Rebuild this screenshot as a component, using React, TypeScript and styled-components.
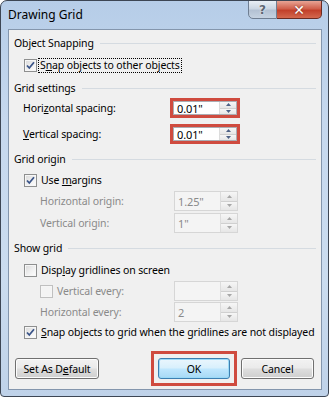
import { createGlobalStyle, styled } from 'styled-components'

const GlobalStyle = createGlobalStyle`
  html, body {
    margin: 0;
    padding: 0;
    background: #ffffff;
  }
  body {
    font-family: 'Noto Sans', 'DejaVu Sans', sans-serif;
    font-size: 10.5px;
    letter-spacing: -0.12px;
    color: #000;
  }
`

const Window = styled.div`
  width: 329px;
  height: 397px;
  box-sizing: border-box;
  border: 1px solid #3d4654;
  border-radius: 7px 7px 4px 4px;
  background: linear-gradient(to bottom, #b6cde8 0%, #c6d8ee 30%, #cbdcef 70%, #bfd2e9 100%);
  display: flex;
  flex-direction: column;
  overflow: hidden;
`

const TitleBar = styled.div`
  height: 28px;
  display: flex;
  align-items: flex-start;
  padding: 0 6px 0 7px;
`

const Title = styled.div`
  font-size: 12px;
  letter-spacing: 0;
  line-height: 28px;
  color: #000;
`

const Caption = styled.div`
  margin-left: auto;
  margin-top: -1px;
  display: flex;
`

const CaptionButton = styled.div<{ $close?: boolean }>`
  width: ${(p) => (p.$close ? 45 : 29)}px;
  height: 19px;
  box-sizing: border-box;
  border: 1px solid ${(p) => (p.$close ? '#6b2b22' : '#6f7e92')};
  border-left-width: ${(p) => (p.$close ? 0 : 1)}px;
  border-radius: ${(p) => (p.$close ? '0 0 5px 0' : '0 0 0 5px')};
  background: ${(p) =>
    p.$close
      ? 'linear-gradient(to bottom, #e8a495 0%, #d0604c 45%, #c2402a 55%, #d4684e 100%)'
      : 'linear-gradient(to bottom, #e8eef5 0%, #cbd6e3 45%, #b3c1d3 55%, #c5d2e1 100%)'};
  display: flex;
  align-items: center;
  justify-content: center;
  font-family: 'DejaVu Sans', sans-serif;
  font-weight: bold;
  font-size: ${(p) => (p.$close ? 14 : 12)}px;
  color: ${(p) => (p.$close ? '#ffffff' : '#5d6672')};
  text-shadow: ${(p) => (p.$close ? '0 0 2px #6b2b22' : '0 0 2px #ffffff')};
`

const Panel = styled.div`
  flex: 1;
  margin: 0 6px 6px 7px;
  border: 1px solid #8496ad;
  background: #f0f0f0;
  display: flex;
  flex-direction: column;
  padding: 0 5px;
`

const Row = styled.div<{ $h: number; $mt?: number; $indent?: number }>`
  height: ${(p) => p.$h}px;
  margin-top: ${(p) => p.$mt || 0}px;
  padding-left: ${(p) => p.$indent || 0}px;
  display: flex;
  align-items: center;
  white-space: nowrap;
`

const SectionTitle = styled.span`
  color: #000;
`

const Rule = styled.div`
  flex: 1;
  height: 1px;
  margin-left: 6px;
  background: #d5dbe1;
`

const Label = styled.div<{ $disabled?: boolean; $w?: number }>`
  color: ${(p) => (p.$disabled ? '#8a8a8a' : '#000')};
  width: ${(p) => (p.$w ? `${p.$w}px` : 'auto')};
  flex: 0 0 auto;
  display: flex;
  align-items: center;
`

const CheckLabel = styled.span<{ $disabled?: boolean; $focus?: boolean }>`
  margin-left: ${(p) => (p.$focus ? 1 : 2)}px;
  padding: 0 1px;
  color: ${(p) => (p.$disabled ? '#8a8a8a' : '#000')};
  border: 1px dotted ${(p) => (p.$focus ? '#000' : 'transparent')};
  line-height: 13px;
`

const Box = styled.div<{ $disabled?: boolean }>`
  width: 13px;
  height: 13px;
  box-sizing: border-box;
  flex: 0 0 auto;
  border: 1px solid ${(p) => (p.$disabled ? '#c0c0c0' : '#8e8f8f')};
  background: ${(p) =>
    p.$disabled ? '#f4f4f4' : 'linear-gradient(135deg, #d8d8d8 0%, #eeeeee 50%, #ffffff 100%)'};
  box-shadow: inset 0 0 0 1px #f6f6f6;
  display: flex;
  align-items: center;
  justify-content: center;
`

const U = styled.span`
  text-decoration: underline;
`

const SpinFrame = styled.div<{ $disabled?: boolean; $h: number }>`
  width: 64px;
  height: ${(p) => p.$h}px;
  box-sizing: border-box;
  border: 1px solid ${(p) => (p.$disabled ? '#d6d6d6' : '#abadb3')};
  background: ${(p) => (p.$disabled ? '#f4f4f4' : '#ffffff')};
  display: flex;
  color: ${(p) => (p.$disabled ? '#8a8a8a' : '#000')};
`

const SpinValue = styled.div`
  flex: 1;
  padding-left: 3px;
  display: flex;
  align-items: center;
  font-size: 11px;
`

const SpinButtons = styled.div`
  width: 16px;
  display: flex;
  flex-direction: column;
  border-left: 1px solid #dcdcdc;
`

const SpinButton = styled.div<{ $bottom?: boolean }>`
  flex: 1;
  display: flex;
  align-items: center;
  justify-content: center;
  background: linear-gradient(to bottom, #f6f6f6, #e6e6e6);
  border-top: ${(p) => (p.$bottom ? '1px solid #d0d0d0' : 'none')};
`

const Highlight = styled.div<{ $ml?: number }>`
  border: 3px solid #cf4b3f;
  margin-left: ${(p) => p.$ml || 0}px;
  display: flex;
`

const ButtonRow = styled.div`
  height: 35px;
  margin-top: 9px;
  display: flex;
  align-items: center;
  padding: 0 2px 0 1px;
`

const Button = styled.div<{ $w: number; $default?: boolean }>`
  width: ${(p) => p.$w}px;
  height: 21px;
  box-sizing: border-box;
  border: 1px solid ${(p) => (p.$default ? '#3c7fb1' : '#707070')};
  border-radius: 3px;
  background: ${(p) =>
    p.$default
      ? 'linear-gradient(to bottom, #eaf6fd 0%, #d9f0fc 45%, #bee6fd 55%, #a7d9f5 100%)'
      : 'linear-gradient(to bottom, #f2f2f2 0%, #ebebeb 45%, #dddddd 55%, #cfcfcf 100%)'};
  box-shadow: inset 0 0 0 1px ${(p) => (p.$default ? '#9bdaf7' : '#fcfcfc')};
  display: flex;
  align-items: center;
  justify-content: center;
  color: #000;
`

const ButtonSpacer = styled.div`
  flex: 1;
`

const OkFrame = styled.div`
  border: 3px solid #cf4b3f;
  padding: 4px;
  margin-right: 4px;
`

const Tick = ({ disabled }: { disabled?: boolean }) => (
  <svg width="9" height="9" viewBox="0 0 9 9">
    <path d="M1 4.5 L3.3 7 L8 1.3" fill="none" stroke={disabled ? '#a0a0a0' : '#3a5488'} strokeWidth="1.8" />
  </svg>
)

const CheckBox = ({ checked, disabled }: { checked?: boolean; disabled?: boolean }) => (
  <Box $disabled={disabled}>{checked && <Tick disabled={disabled} />}</Box>
)

const Arrow = ({ down, disabled }: { down?: boolean; disabled?: boolean }) => (
  <svg width="5" height="3" viewBox="0 0 5 3">
    <path d={down ? 'M0 0 L5 0 L2.5 3 Z' : 'M0 3 L5 3 L2.5 0 Z'} fill={disabled ? '#a7a7a7' : '#4d6185'} />
  </svg>
)

const SpinBox = ({ value, disabled, h = 20 }: { value: string; disabled?: boolean; h?: number }) => (
  <SpinFrame $disabled={disabled} $h={h}>
    <SpinValue>{value}</SpinValue>
    <SpinButtons>
      <SpinButton>
        <Arrow disabled={disabled} />
      </SpinButton>
      <SpinButton $bottom>
        <Arrow down disabled={disabled} />
      </SpinButton>
    </SpinButtons>
  </SpinFrame>
)

const Section = ({ title, mt, h = 20 }: { title: string; mt?: number; h?: number }) => (
  <Row $h={h} $mt={mt}>
    <SectionTitle>{title}</SectionTitle>
    <Rule />
  </Row>
)

export default function App() {
  return (
    <>
      <GlobalStyle />
      <Window>
        <TitleBar>
          <Title>Drawing Grid</Title>
          <Caption>
            <CaptionButton>?</CaptionButton>
            <CaptionButton $close>✕</CaptionButton>
          </Caption>
        </TitleBar>
        <Panel>
          <Section title="Object Snapping" h={26} />
          <Row $h={18} $indent={10}>
            <CheckBox checked />
            <CheckLabel $focus>
              S<U>n</U>ap objects to other objects
            </CheckLabel>
          </Row>
          <Section title="Grid settings" mt={4} />
          <Row $h={20} $indent={9}>
            <Label $w={151}>
              <span>
                Hori<U>z</U>ontal spacing:
              </span>
            </Label>
            <Highlight $ml={-4}>
              <SpinBox value={'0.01"'} h={14} />
            </Highlight>
          </Row>
          <Row $h={20} $mt={6} $indent={9}>
            <Label $w={151}>
              <span>
                <U>V</U>ertical spacing:
              </span>
            </Label>
            <Highlight $ml={-4}>
              <SpinBox value={'0.01"'} h={14} />
            </Highlight>
          </Row>
          <Section title="Grid origin" mt={5} />
          <Row $h={22} $indent={10}>
            <CheckBox checked />
            <CheckLabel>
              Use <U>m</U>argins
            </CheckLabel>
          </Row>
          <Row $h={20} $indent={26}>
            <Label $w={134} $disabled>
              Horizontal origin:
            </Label>
            <SpinBox value={'1.25"'} disabled />
          </Row>
          <Row $h={20} $mt={2} $indent={26}>
            <Label $w={134} $disabled>
              Vertical origin:
            </Label>
            <SpinBox value={'1"'} disabled />
          </Row>
          <Section title="Show grid" mt={5} />
          <Row $h={22} $mt={1} $indent={10}>
            <CheckBox />
            <CheckLabel>
              Disp<U>l</U>ay gridlines on screen
            </CheckLabel>
          </Row>
          <Row $h={20} $indent={26}>
            <Label $w={134} $disabled>
              <CheckBox disabled />
              <CheckLabel $disabled>Vertical every:</CheckLabel>
            </Label>
            <SpinBox value="" disabled />
          </Row>
          <Row $h={20} $mt={1} $indent={26}>
            <Label $w={134} $disabled>
              Horizontal every:
            </Label>
            <SpinBox value="2" disabled />
          </Row>
          <Row $h={20} $indent={10}>
            <CheckBox checked />
            <CheckLabel>
              <U>S</U>nap objects to grid when the gridlines are not displayed
            </CheckLabel>
          </Row>
          <ButtonRow>
            <Button $w={84}>
              Set As D<U>e</U>fault
            </Button>
            <ButtonSpacer />
            <OkFrame>
              <Button $w={72} $default>
                OK
              </Button>
            </OkFrame>
            <Button $w={73}>Cancel</Button>
          </ButtonRow>
        </Panel>
      </Window>
    </>
  )
}
